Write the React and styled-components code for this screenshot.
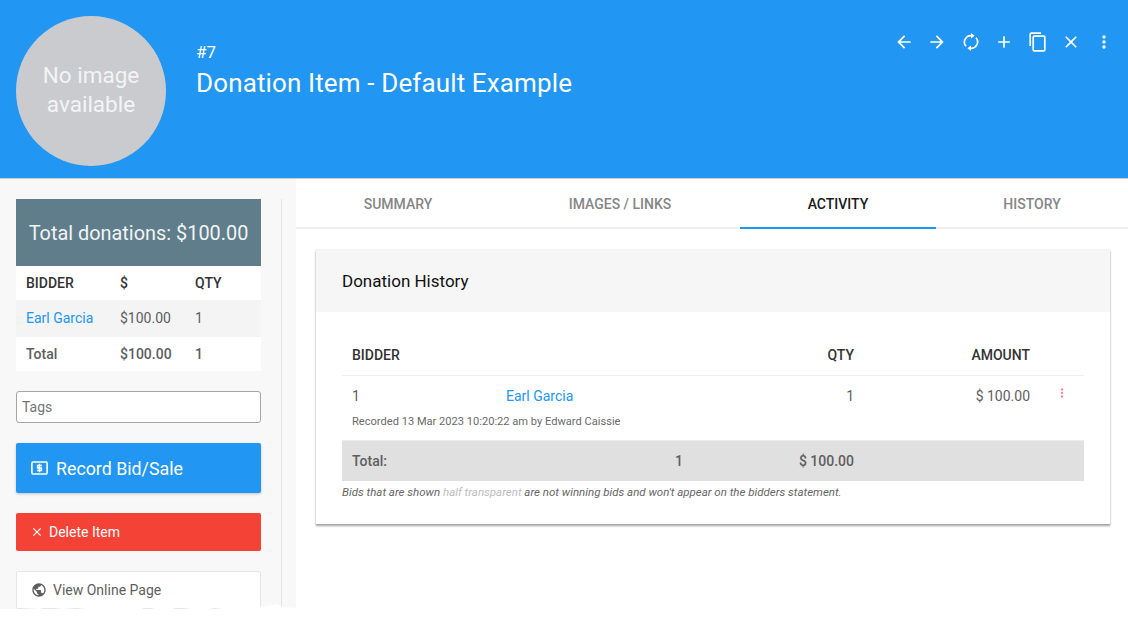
import React from "react";
import styled, { createGlobalStyle } from "styled-components";
import {
  MdArrowBack,
  MdArrowForward,
  MdAdd,
  MdClose,
  MdMoreVert,
  MdPublic,
} from "react-icons/md";

const GlobalStyle = createGlobalStyle`
  html, body {
    margin: 0;
    padding: 0;
    background: #fff;
    font-family: Roboto, "Liberation Sans", sans-serif;
    color: #5e5e5e;
  }
  * { box-sizing: border-box; }
`;

const Page = styled.div`
  width: 1128px;
  height: 639px;
  overflow: hidden;
  position: relative;
`;

const Header = styled.header`
  height: 179px;
  background: #2196f3;
  border-bottom: 1px solid #c9cdd0;
  display: flex;
  padding: 16px 0 0 16px;
  position: relative;
`;

const Avatar = styled.div`
  width: 150px;
  height: 150px;
  border-radius: 50%;
  background: #c9cbcf;
  color: #f4f4f5;
  display: flex;
  align-items: center;
  justify-content: center;
  text-align: center;
  font-size: 22.5px;
  line-height: 29px;
  padding-bottom: 3px;
  flex: none;
`;

const TitleBlock = styled.div`
  margin-left: 30px;
  padding-top: 26px;
  color: #fff;
`;

const ItemNo = styled.div`
  font-size: 17px;
  line-height: 20px;
`;

const Title = styled.h1`
  margin: 1px 0 0;
  font-size: 26px;
  font-weight: 400;
  line-height: 40px;
  letter-spacing: 0.13px;
`;

const Actions = styled.div`
  position: absolute;
  top: 25px;
  right: 7px;
  display: flex;
  color: #fff;
`;

const ActionBtn = styled.span`
  width: 33.4px;
  height: 33px;
  display: flex;
  align-items: center;
  justify-content: center;
  font-size: 20px;
`;

const Body = styled.div`
  display: flex;
  height: 430px;
`;

const Sidebar = styled.aside`
  width: 296px;
  height: 430px;
  flex: none;
  background: #f8f8f8;
  padding: 20px 14px 0 16px;
  overflow: hidden;
`;

const SideColumn = styled.div`
  border-right: 1px solid #e4e4e4;
  padding-right: 20px;
  width: 266px;
  height: 100%;
`;

const TotalBanner = styled.div`
  height: 67px;
  background: #607d8b;
  color: #f1f4f5;
  font-size: 19.9px;
  padding-top: 1px;
  display: flex;
  align-items: center;
  justify-content: center;
`;

const SideTable = styled.div`
  background: #fff;
  font-size: 14px;
`;

const SideRow = styled.div`
  display: grid;
  grid-template-columns: 94px 75px 1fr;
  padding-left: 10px;
  padding-bottom: ${(p) => (p.$shade ? 2 : 0)}px;
  align-items: center;
  height: ${(p) => p.$h}px;
  background: ${(p) => (p.$shade ? "#f4f4f4" : "#fff")};
  color: ${(p) => (p.$head ? "#333" : "#5e5e5e")};
  font-weight: ${(p) => (p.$bold ? 500 : 400)};
`;

const Link = styled.a`
  color: #2196f3;
  text-decoration: none;
`;

const TagsInput = styled.div`
  margin-top: 20px;
  height: 32px;
  background: #fff;
  border: 1px solid #a5a5a5;
  border-radius: 3px;
  padding-left: 5px;
  font-size: 14px;
  line-height: 30px;
  color: #757575;
`;

const Button = styled.div`
  display: flex;
  align-items: center;
  margin-top: 20px;
  border-radius: 2px;
  height: ${(p) => p.$h}px;
  padding-left: ${(p) => p.$pad}px;
  background: ${(p) => p.$bg};
  color: ${(p) => p.$fg};
  font-size: ${(p) => p.$size}px;
  box-shadow: ${(p) => (p.$raised ? "0 1px 3px rgba(0,0,0,.22)" : "none")};
  border: ${(p) => (p.$line ? "1px solid #e6e6e6" : "none")};
  svg { flex: none; }
`;

const Main = styled.main`
  flex: 1;
  background: #fff;
`;

const Tabs = styled.nav`
  display: grid;
  grid-template-columns: 204px 240px 196px 1fr;
  height: 50px;
  border-bottom: 2px solid #eee;
`;

const Tab = styled.div`
  display: flex;
  align-items: center;
  justify-content: center;
  height: 50px;
  padding-top: 1px;
  font-size: 14px;
  font-weight: 500;
  color: ${(p) => (p.$active ? "#1a1a1a" : "#868686")};
  border-bottom: 2px solid ${(p) => (p.$active ? "#2196f3" : "transparent")};
`;

const Card = styled.section`
  margin: 21px 18px 0 20px;
  height: 275px;
  background: #fff;
  box-shadow: 0 1px 2px rgba(0, 0, 0, 0.35), 0 0 2px rgba(0, 0, 0, 0.08);
  border-bottom: 1px solid #a8a8a8;
`;

const CardHead = styled.div`
  height: 62px;
  background: #f6f6f6;
  color: #111;
  font-size: 17px;
  display: flex;
  align-items: center;
  padding-left: 26px;
`;

const CardBody = styled.div`
  padding: 22px 26px 0 26px;
`;

const HistoryGrid = styled.div`
  display: grid;
  grid-template-columns: 154px 1fr 64px 176px 54px;
  align-items: center;
  font-size: 14px;
`;

const HeadRow = styled(HistoryGrid)`
  height: 42px;
  padding-top: 1px;
  border-bottom: 1px solid #eee;
  color: #333;
  font-weight: 500;
  padding-left: 10px;
`;

const DataRow = styled(HistoryGrid)`
  height: 40px;
  padding: 0 0 0 10px;
`;

const Right = styled.span`
  text-align: right;
`;

const RowMenu = styled.span`
  display: flex;
  justify-content: center;
  color: #f58a8a;
  font-size: 14px;
  margin-top: -6px;
  margin-left: 10px;
`;

const Recorded = styled.div`
  font-size: 11.1px;
  height: 24px;
  padding-left: 10px;
  line-height: 11px;
  color: #6a6a6a;
`;

const TotalRow = styled.div`
  height: 41px;
  background: #e0e0e0;
  border-top: 1px solid #eaeaea;
  display: grid;
  grid-template-columns: 331px 171px;
  align-items: center;
  font-size: 14px;
  font-weight: 500;
  padding-left: 10px;
`;

const TotalMid = styled.span`
  display: flex;
  justify-content: space-between;
`;

const Note = styled.p`
  margin: 4px 0 0;
  font-size: 11.5px;
  font-style: italic;
  color: #666;
`;

const Faded = styled.span`
  color: #bdbdbd;
`;

const TornEdge = styled.svg`
  position: absolute;
  left: 0;
  top: 600px;
  display: block;
`;

// toolbar icons the icon packages don't carry in this shape
const CopyIcon = () => (
  <svg width="20" height="20" viewBox="0 0 20 20" fill="none" stroke="currentColor" strokeWidth="1.7">
    <rect x="5.2" y="4.2" width="11.6" height="14.6" rx="1" />
    <path d="M2.2 14V2.2a1 1 0 0 1 1-1H13" />
  </svg>
);

const SyncIcon = () => (
  <svg width="20" height="20" viewBox="0 0 20 20">
    <g fill="none" stroke="currentColor" strokeWidth="1.7">
      <path d="M5 14.2A6.3 6.3 0 0 1 10.6 3.8" />
      <path d="M15 5.8A6.3 6.3 0 0 1 9.4 16.2" />
    </g>
    <path d="M10 1l3.6 2.8L10 6.6zM10 13.4l-3.6 2.8L10 19z" fill="currentColor" />
  </svg>
);

const MoneyIcon = () => (
  <svg width="17" height="14" viewBox="0 0 17 14" fill="none" stroke="currentColor" style={{ marginRight: 8, marginLeft: 1 }}>
    <rect x="0.9" y="1" width="15.2" height="12" rx="1" strokeWidth="1.6" />
    <path d="M11 4.4H6.6v2.6h3.8v2.6H6M8.5 2.8v8.4" strokeWidth="1.5" />
  </svg>
);

export default function App() {
  return (
    <Page>
      <GlobalStyle />
      <Header>
        <Avatar>
          No image
          <br />
          available
        </Avatar>
        <TitleBlock>
          <ItemNo>#7</ItemNo>
          <Title>Donation Item - Default Example</Title>
        </TitleBlock>
        <Actions>
          <ActionBtn><MdArrowBack /></ActionBtn>
          <ActionBtn><MdArrowForward /></ActionBtn>
          <ActionBtn><SyncIcon /></ActionBtn>
          <ActionBtn><MdAdd /></ActionBtn>
          <ActionBtn><CopyIcon /></ActionBtn>
          <ActionBtn><MdClose /></ActionBtn>
          <ActionBtn><MdMoreVert /></ActionBtn>
        </Actions>
      </Header>
      <Body>
        <Sidebar>
          <SideColumn>
            <TotalBanner>Total donations: $100.00</TotalBanner>
            <SideTable>
              <SideRow $h={34} $head $bold>
                <span>BIDDER</span>
                <span>$</span>
                <span>QTY</span>
              </SideRow>
              <SideRow $h={37} $shade>
                <Link>Earl Garcia</Link>
                <span>$100.00</span>
                <span>1</span>
              </SideRow>
              <SideRow $h={34} $bold>
                <span>Total</span>
                <span>$100.00</span>
                <span>1</span>
              </SideRow>
            </SideTable>
            <TagsInput>Tags</TagsInput>
            <Button $h={50} $pad={14} $bg="#2196f3" $fg="#fff" $size={17.8} $raised>
              <MoneyIcon />
              Record Bid/Sale
            </Button>
            <Button $h={38} $pad={14} $bg="#f44336" $fg="#fff" $size={14}>
              <MdClose size={14} style={{ marginRight: 5 }} />
              Delete Item
            </Button>
            <Button $h={38} $pad={14} $bg="#fff" $fg="#5e5e5e" $size={14} $line>
              <MdPublic size={16} style={{ marginRight: 6 }} />
              View Online Page
            </Button>
          </SideColumn>
        </Sidebar>
        <Main>
          <Tabs>
            <Tab>SUMMARY</Tab>
            <Tab>IMAGES / LINKS</Tab>
            <Tab $active>ACTIVITY</Tab>
            <Tab>HISTORY</Tab>
          </Tabs>
          <Card>
            <CardHead>Donation History</CardHead>
            <CardBody>
              <HeadRow>
                <span>BIDDER</span>
                <span />
                <Right>QTY</Right>
                <Right>AMOUNT</Right>
                <span />
              </HeadRow>
              <DataRow>
                <span>1</span>
                <Link>Earl Garcia</Link>
                <Right>1</Right>
                <Right>$ 100.00</Right>
                <RowMenu><MdMoreVert /></RowMenu>
              </DataRow>
              <Recorded>Recorded 13 Mar 2023 10:20:22 am by Edward Caissie</Recorded>
              <TotalRow>
                <TotalMid>
                  <span>Total:</span>
                  <span>1</span>
                </TotalMid>
                <Right>$ 100.00</Right>
              </TotalRow>
              <Note>
                Bids that are shown <Faded>half transparent</Faded> are not winning bids and won't appear on the bidders statement.
              </Note>
            </CardBody>
          </Card>
        </Main>
      </Body>
      <TornEdge width="300" height="39" viewBox="0 0 300 39">
        <path
          d="M0 10 L8 12 L20 9 L40 8 L48 10 L62 8 L76 9 L86 8 L96 7 L120 8 L140 7 L146 10 L156 8 L170 7 L178 10 L190 8 L204 7 L214 9 L232 7 L250 8 L268 6 L276 4 L284 7 L296 8 L300 8 L300 39 L0 39 Z"
          fill="#fff"
        />
      </TornEdge>
    </Page>
  );
}
